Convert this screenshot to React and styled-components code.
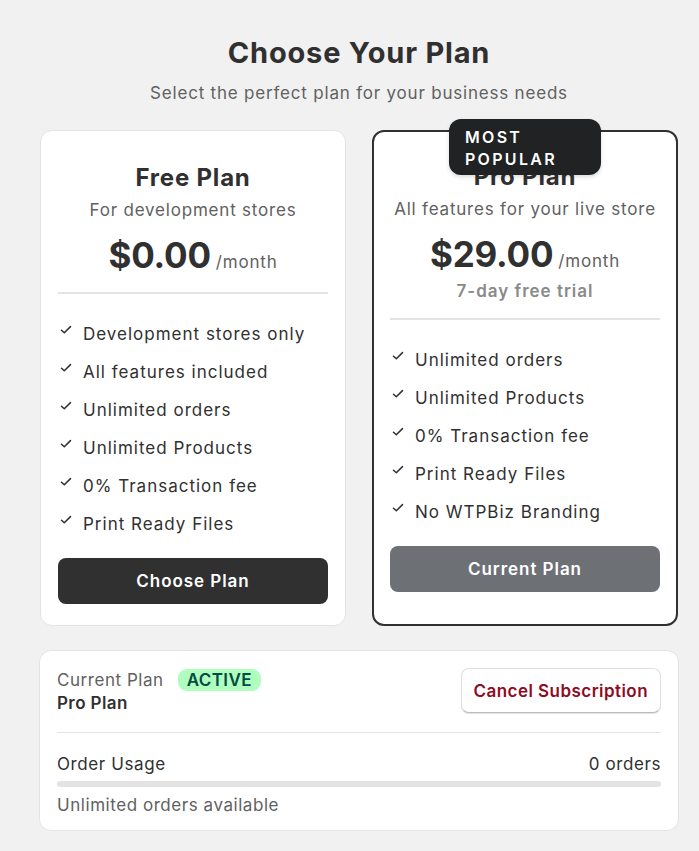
import React from "react";
import styled, { createGlobalStyle } from "styled-components";

const Global = createGlobalStyle`
  html, body { margin: 0; padding: 0; background: #f1f1f1; }
  body { font-family: Inter, "Noto Sans", sans-serif; color: #303030; -webkit-font-smoothing: antialiased; }
  * { box-sizing: border-box; }
`;

const Page = styled.div`
  width: 640px;
  margin-left: 39px;
  padding-top: 34px;
  padding-bottom: 20px;
`;

const Header = styled.div`
  display: flex;
  flex-direction: column;
  align-items: center;
  gap: 9px;
  margin-bottom: 25px;
`;

const Title = styled.h1`
  margin: 0;
  font-size: 29px;
  line-height: 38px;
  font-weight: 700;
  letter-spacing: 0.8px;
  color: #303030;
`;

const Subtitle = styled.p`
  margin: 0;
  font-size: 17px;
  line-height: 24px;
  color: #616161;
  letter-spacing: 0.8px;
`;

const Grid = styled.div`
  display: grid;
  grid-template-columns: 306px 306px;
  gap: 26px;
  padding-left: 1px;
  margin-bottom: 24px;
`;

const Card = styled.div`
  position: relative;
  background: #fff;
  border-radius: 12px;
  border: ${(p) => (p.$featured ? "2px solid #303030" : "1px solid #e3e3e3")};
  padding: ${(p) => (p.$featured ? "30px 16px 32px" : "32px 17px 21px")};
  display: flex;
  flex-direction: column;
`;

const Badge = styled.div`
  position: absolute;
  top: -13px;
  left: 50%;
  transform: translateX(-50%);
  width: 152px;
  height: 56px;
  background: #202223;
  color: #fff;
  border-radius: 12px;
  padding: 7px 16px;
  font-size: 16px;
  line-height: 22px;
  font-weight: 600;
  letter-spacing: 2.3px;
  box-shadow: 0 2px 4px rgba(0, 0, 0, 0.15);
`;

const PlanHead = styled.div`
  display: flex;
  flex-direction: column;
  align-items: center;
  text-align: center;
`;

const PlanName = styled.h2`
  margin: 0;
  font-size: 24px;
  line-height: 30px;
  font-weight: 700;
  letter-spacing: 0.8px;
  color: #303030;
`;

const PlanDesc = styled.div`
  margin-top: 5px;
  font-size: 17px;
  line-height: 24px;
  color: #616161;
  letter-spacing: 0.8px;
`;

const PriceRow = styled.div`
  margin-top: 10px;
  display: flex;
  align-items: baseline;
  gap: 5px;
`;

const Price = styled.span`
  font-size: 35px;
  line-height: 46px;
  font-weight: 700;
  letter-spacing: -0.2px;
  color: #303030;
`;

const Per = styled.span`
  font-size: 17px;
  color: #616161;
  letter-spacing: 0.8px;
`;

const Trial = styled.div`
  margin-top: 2px;
  font-size: 17px;
  line-height: 24px;
  font-weight: 600;
  color: #8a8a8a;
  letter-spacing: 1px;
`;

const Divider = styled.hr`
  border: none;
  height: ${(p) => p.$h || "2px"};
  background: #e3e3e3;
  margin: ${(p) => p.$m || "14px 0 28px"};
`;

const Features = styled.ul`
  list-style: none;
  margin: 0 0 22px;
  padding: 0;
  display: flex;
  flex-direction: column;
  gap: 14px;
`;

const Feature = styled.li`
  display: flex;
  align-items: center;
  gap: 10px;
  font-size: 17px;
  line-height: 24px;
  color: #303030;
  letter-spacing: 1px;
  padding-left: 1px;
`;

const CheckWrap = styled.span`
  display: inline-flex;
  width: 14px;
  height: 14px;
  margin-top: -8px;
  flex-shrink: 0;
`;

const Button = styled.button`
  height: 46px;
  width: 100%;
  border: none;
  border-radius: 8px;
  background: ${(p) => (p.$disabled ? "#6d7175" : "#303030")};
  color: #fff;
  font-family: inherit;
  font-size: 17px;
  font-weight: 600;
  letter-spacing: 0.95px;
  cursor: pointer;
`;

const Status = styled.div`
  background: #fff;
  border-radius: 12px;
  border: 1px solid #e3e3e3;
  padding: 17px 17px 13px;
`;

const StatusTop = styled.div`
  display: flex;
  justify-content: space-between;
  align-items: flex-start;
`;

const Col = styled.div`
  display: flex;
  flex-direction: column;
`;

const Line = styled.div`
  display: flex;
  align-items: center;
  gap: 14px;
`;

const Muted = styled.span`
  font-size: 17px;
  line-height: 24px;
  color: #616161;
  letter-spacing: 0.55px;
`;

const Strong = styled.span`
  font-size: 17px;
  line-height: 22px;
  font-weight: 600;
  letter-spacing: 0.4px;
  color: #303030;
`;

const Pill = styled.span`
  background: #affebf;
  color: #014b40;
  font-size: 17px;
  line-height: 22px;
  font-weight: 600;
  padding: 0 9px;
  border-radius: 9px;
  letter-spacing: 0.4px;
`;

const CancelBtn = styled.button`
  height: 45px;
  padding: 0 12px;
  background: #fff;
  border: 1px solid #e0e0e0;
  border-bottom-color: #bbb;
  border-radius: 8px;
  box-shadow: 0 1px 1px rgba(0, 0, 0, 0.12);
  color: #8e0b21;
  font-family: inherit;
  font-size: 17px;
  font-weight: 600;
  letter-spacing: 0.45px;
`;

const UsageRow = styled.div`
  display: flex;
  justify-content: space-between;
  font-size: 17px;
  line-height: 24px;
  color: #303030;
  letter-spacing: 0.6px;
`;

const Bar = styled.div`
  height: 6px;
  border-radius: 3px;
  background: #e3e3e3;
  margin: 5px 0 6px;
  overflow: hidden;
`;

const BarFill = styled.div`
  height: 100%;
  background: #303030;
`;

const Check = () => (
  <CheckWrap>
    <svg width="14" height="14" viewBox="0 0 14 14" fill="none">
      <path d="M2.5 7.2 L5.3 9.8 L11.5 3.6" stroke="#303030" strokeWidth="1.5" strokeLinecap="round" strokeLinejoin="round" />
    </svg>
  </CheckWrap>
);

const freeFeatures = [
  "Development stores only",
  "All features included",
  "Unlimited orders",
  "Unlimited Products",
  "0% Transaction fee",
  "Print Ready Files",
];

const proFeatures = [
  "Unlimited orders",
  "Unlimited Products",
  "0% Transaction fee",
  "Print Ready Files",
  "No WTPBiz Branding",
];

export default function App() {
  const used = 0;
  return (
    <>
      <Global />
      <Page>
        <Header>
          <Title>Choose Your Plan</Title>
          <Subtitle>Select the perfect plan for your business needs</Subtitle>
        </Header>
        <Grid>
          <Card>
            <PlanHead>
              <PlanName>Free Plan</PlanName>
              <PlanDesc>For development stores</PlanDesc>
              <PriceRow>
                <Price>$0.00</Price>
                <Per>/month</Per>
              </PriceRow>
            </PlanHead>
            <Divider />
            <Features>
              {freeFeatures.map((f) => (
                <Feature key={f}>
                  <Check />
                  {f}
                </Feature>
              ))}
            </Features>
            <Button>Choose Plan</Button>
          </Card>
          <Card $featured>
            <Badge>MOST POPULAR</Badge>
            <PlanHead>
              <PlanName>Pro Plan</PlanName>
              <PlanDesc>All features for your live store</PlanDesc>
              <PriceRow>
                <Price>$29.00</Price>
                <Per>/month</Per>
              </PriceRow>
              <Trial>7-day free trial</Trial>
            </PlanHead>
            <Divider $m="15px 0 28px" />
            <Features>
              {proFeatures.map((f) => (
                <Feature key={f}>
                  <Check />
                  {f}
                </Feature>
              ))}
            </Features>
            <Button $disabled>Current Plan</Button>
          </Card>
        </Grid>
        <Status>
          <StatusTop>
            <Col>
              <Line>
                <Muted>Current Plan</Muted>
                <Pill>ACTIVE</Pill>
              </Line>
              <Strong>Pro Plan</Strong>
            </Col>
            <CancelBtn>Cancel Subscription</CancelBtn>
          </StatusTop>
          <Divider $h="1px" $m="18px 0 19px" />
          <UsageRow>
            <span>Order Usage</span>
            <span>{used} orders</span>
          </UsageRow>
          <Bar>
            <BarFill style={{ width: `${used}%` }} />
          </Bar>
          <Muted>Unlimited orders available</Muted>
        </Status>
      </Page>
    </>
  );
}
